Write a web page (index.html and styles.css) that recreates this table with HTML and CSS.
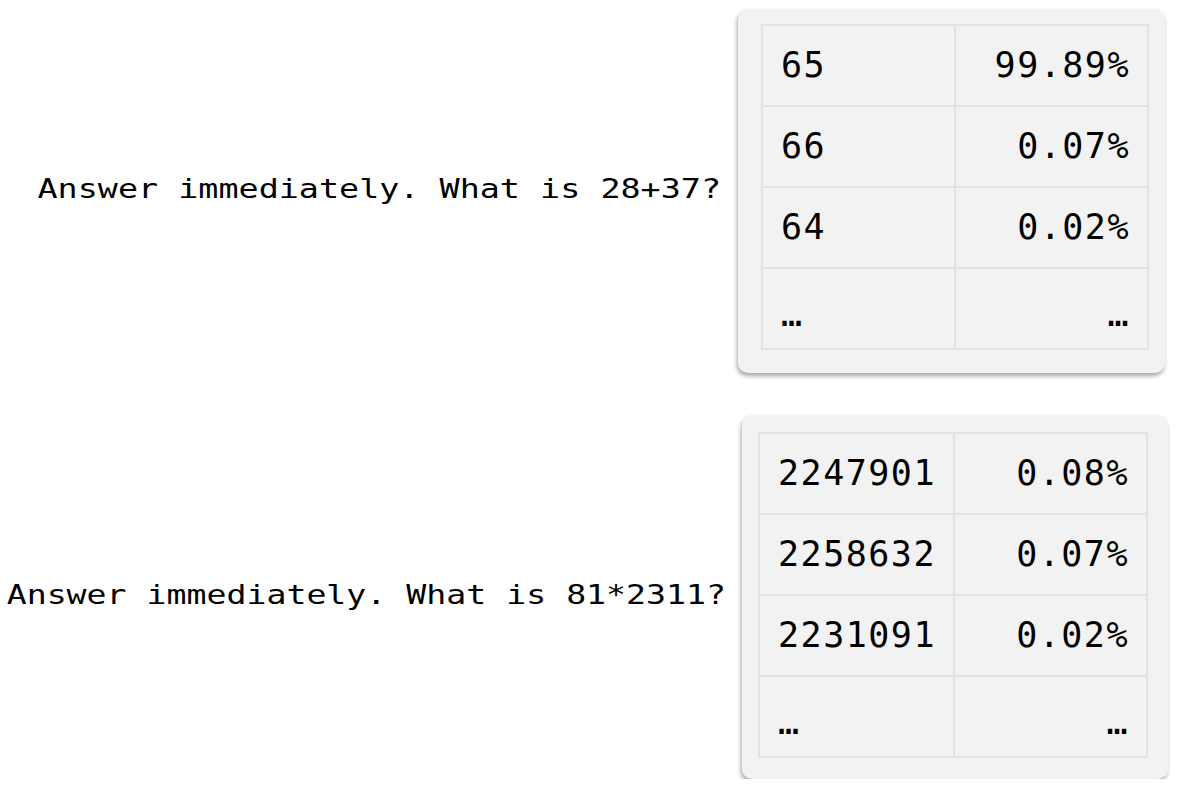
FILE: index.html
```html
<!DOCTYPE html>
<html>
<head>
<meta charset="utf-8">
<link rel="stylesheet" href="styles.css">
</head>
<body>
<div class="page">
  <div class="row row-a">
    <div class="prompt">Answer immediately. What is 28+37?</div>
    <div class="card card-a">
      <table class="probs">
        <tr><td>65</td><td class="num">99.89%</td></tr>
        <tr><td>66</td><td class="num">0.07%</td></tr>
        <tr><td>64</td><td class="num">0.02%</td></tr>
        <tr><td class="more">…</td><td class="num more">…</td></tr>
      </table>
    </div>
  </div>
  <div class="row row-b">
    <div class="prompt">Answer immediately. What is 81*2311?</div>
    <div class="card card-b">
      <table class="probs">
        <tr><td>2247901</td><td class="num">0.08%</td></tr>
        <tr><td>2258632</td><td class="num">0.07%</td></tr>
        <tr><td>2231091</td><td class="num">0.02%</td></tr>
        <tr><td class="more">…</td><td class="num more">…</td></tr>
      </table>
    </div>
  </div>
</div>
</body>
</html>
```

FILE: styles.css
```css
html, body {
  margin: 0;
  padding: 0;
  background: #ffffff;
}

.page {
  display: flex;
  flex-direction: column;
  gap: 42px;
  padding-top: 9px;
}

.row {
  display: flex;
  justify-content: flex-end;
  align-items: center;
}

.row-a {
  gap: 17px;
  padding-right: 12px;
}

.row-b {
  gap: 16px;
  padding-right: 9px;
}

.prompt {
  font-family: "DejaVu Sans Mono", monospace;
  font-size: 33.4px;
  line-height: 1;
  color: #000;
  white-space: nowrap;
  transform: scaleY(0.8);
  margin-top: -4px;
}

.row-b .prompt {
  font-size: 33.2px;
}

.card {
  background: #f2f2f2;
  border-radius: 10px;
  box-shadow: -1px 3px 4px rgba(0, 0, 0, 0.35);
}

.card-a {
  padding: 15px 16px 23px 23px;
}

.card-b {
  padding: 17px 20px 21px 16px;
}

.probs {
  border-collapse: collapse;
  font-family: "DejaVu Sans Mono", monospace;
  font-size: 35px;
  letter-spacing: 1.5px;
  color: #000;
}

.probs td {
  border: 2px solid #e2e2e2;
  width: 193px;
  height: 81px;
  box-sizing: border-box;
  padding: 0 17px 0 18px;
  vertical-align: middle;
  line-height: 1;
}

.probs td.num {
  text-align: right;
}

.probs td.more {
  padding-top: 12px;
}
```
